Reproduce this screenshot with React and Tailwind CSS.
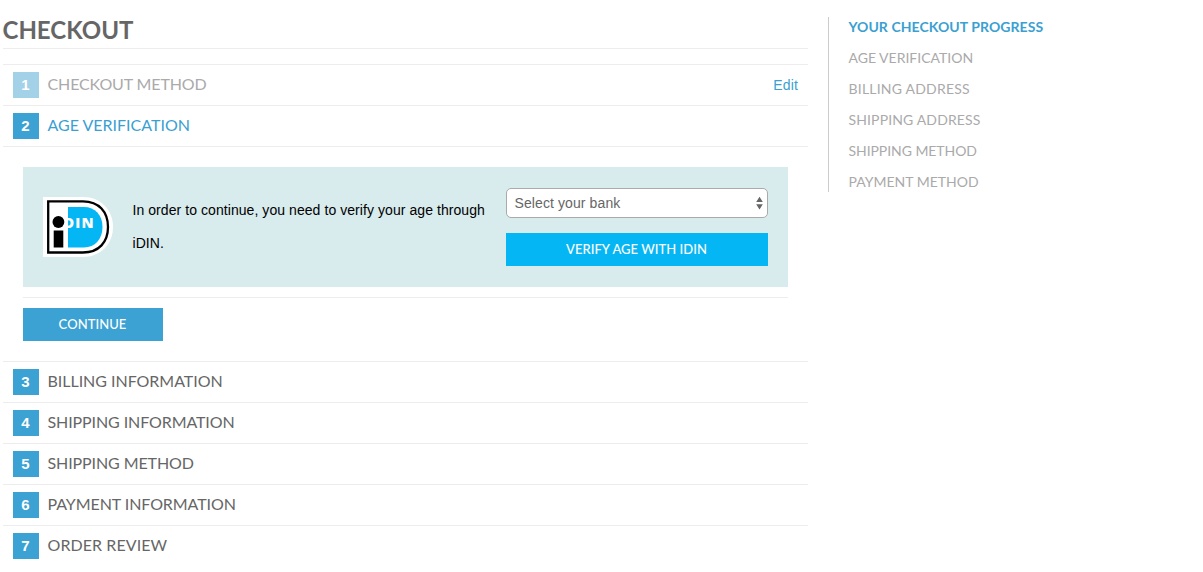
import React from 'react';

const display = "font-['Lato','Open_Sans',sans-serif]";
const body = "font-['Liberation_Sans',Arial,sans-serif]";

function Step({ n, title, tone = 'todo', tracking = '', edit }) {
  const color = tone === 'done' ? 'text-[#aaaaaa]' : tone === 'active' ? 'text-[#3b9fd2]' : 'text-[#666666]';
  const box = tone === 'done' ? 'bg-[#a2d1e8]' : 'bg-[#3ba2d3]';
  return (
    <div className="flex h-[41px] items-start border-t border-[#ededed] px-2.5 pt-[7px]">
      <span className={`flex size-[26px] items-center justify-center pr-px text-[15px] font-bold text-white ${box}`}>{n}</span>
      <h2 className={`ml-[8.5px] h-[26px] text-[16px] leading-[23px] ${display} ${color} ${tracking}`}>{title}</h2>
      {edit && <a href="#" className="ml-auto text-[14px] leading-[27px] tracking-[0.01em] text-[#3b9fd2]">Edit</a>}
    </div>
  );
}

function IdinLogo() {
  return (
    <svg className="h-[60px] w-[70px] shrink-0" viewBox="0 0 70 60">
      <path d="M0 0H40C58 0 70 13 70 30S58 60 40 60H0Z" fill="#fff" />
      <path d="M5.200 4.300H40C56 4.300 65 15 65 30S56 55.500 40 55.500H5.200Z" fill="#fff" stroke="#000" strokeWidth="2.300" />
      <path d="M25 10H41C52 10 59.500 18 59.500 30S52 50.500 41 50.500H25Z" fill="#05b6f4" />
      <text x="20.500" y="30.500" fill="#fff" fontFamily="Open Sans" fontSize="14.500" fontWeight="800" textLength="30">DIN</text>
      <circle cx="15.400" cy="25" r="6.800" fill="#fff" />
      <circle cx="15.400" cy="25" r="5.900" fill="#000" />
      <path d="M10.700 33.500H20.300V50.500H10.700Z" fill="#000" />
    </svg>
  );
}

const progress = [
  { label: 'AGE VERIFICATION', tracking: '' },
  { label: 'BILLING ADDRESS', tracking: 'tracking-[0.22px]' },
  { label: 'SHIPPING ADDRESS', tracking: 'tracking-[0.14px]' },
  { label: 'SHIPPING METHOD', tracking: 'tracking-[-0.06px]' },
  { label: 'PAYMENT METHOD', tracking: '' },
];

export default function App() {
  return (
    <div className={`flex h-[572px] items-start overflow-hidden bg-white pl-[3px] ${body}`}>
      <main className="w-[805px]">
        <h1 className={`h-[49px] border-b border-[#ededed] pt-[14px] text-[24px] leading-8 font-bold text-[#666666] ${display}`}>
          <span className="-ml-[0.5px]">CHECKOUT</span>
        </h1>
        <div className="mt-[15px]">
          <Step n="1" title="CHECKOUT METHOD" tone="done" tracking="tracking-[-0.12px]" edit />
          <Step n="2" title="AGE VERIFICATION" tone="active" />
          <section className="h-[215px] border-t border-[#ededed] px-5 pt-5">
            <div className="flex h-[120px] bg-[#d8ebed] px-5">
              <div className="pt-[30px]"><IdinLogo /></div>
              <p className="ml-[19.5px] w-[373.5px] pt-[27px] text-[14px] leading-[33px] tracking-[0.065px] text-black">
                In order to continue, you need to verify your age through<br />iDIN.
              </p>
              <div className="w-[262px] pt-[21px]">
                <div className="flex h-[30px] items-center justify-between rounded-[5px] border border-[#aaaaaa] bg-white pr-1 pl-[7.5px] text-[14px] tracking-[0.1px] text-[#666666]">
                  <span>Select your bank</span>
                  <svg className="h-3.5 w-[7px]" viewBox="0 0 7 14" fill="#666"><path d="M3.500 .8L6.800 6H.2ZM3.500 13.500L.2 8.300H6.800Z" /></svg>
                </div>
                <button className={`mt-[15px] block h-[33px] w-full bg-[#05b6f4] pr-px text-[13px] font-medium tracking-[0.04px] text-white ${display}`}>VERIFY AGE WITH IDIN</button>
              </div>
            </div>
            <div className="mt-2.5 border-t border-[#ededed] pt-2.5">
              <button className={`block h-[33px] w-[140px] bg-[#3ba2d3] pr-[7px] pl-1.5 text-[13px] font-medium tracking-[0.06px] text-white ${display}`}>CONTINUE</button>
            </div>
          </section>
          <Step n="3" title="BILLING INFORMATION" tracking="tracking-[-0.03px]" />
          <Step n="4" title="SHIPPING INFORMATION" tracking="tracking-[-0.1px]" />
          <Step n="5" title="SHIPPING METHOD" tracking="tracking-[-0.1px]" />
          <Step n="6" title="PAYMENT INFORMATION" tracking="tracking-[-0.08px]" />
          <Step n="7" title="ORDER REVIEW" tracking="tracking-[0.08px]" />
        </div>
      </main>
      <aside className={`mt-[17px] ml-5 h-[175px] border-l border-[#cccccc] pl-[19.5px] text-[14px] text-[#aaaaaa] ${display}`}>
        <h3 className="h-[31px] leading-5 font-bold tracking-[0.06px] text-[#3b9fd2]">YOUR CHECKOUT PROGRESS</h3>
        {progress.map(({ label, tracking }) => (
          <p key={label} className={`h-[31px] leading-5 ${tracking}`}>{label}</p>
        ))}
      </aside>
    </div>
  );
}
